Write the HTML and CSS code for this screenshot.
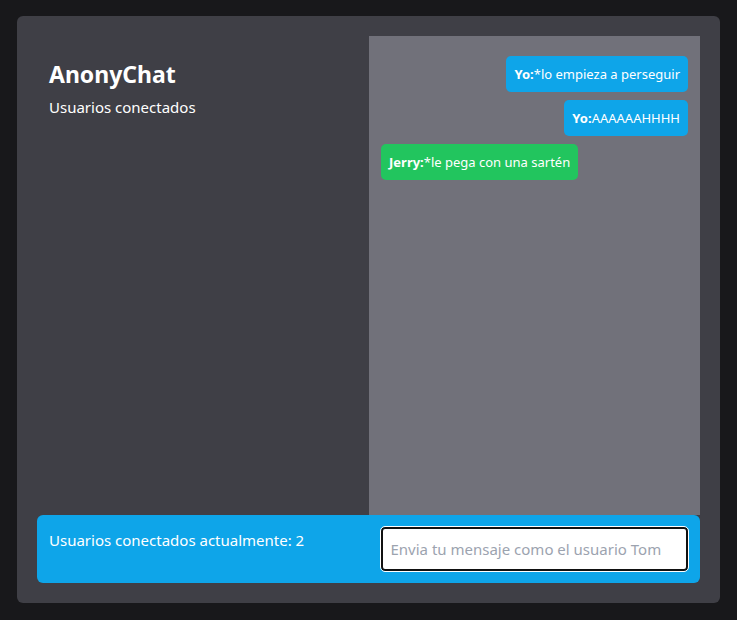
FILE: index.html
```html
<!DOCTYPE html>
<html lang="es">
<head>
<meta charset="utf-8">
<title>AnonyChat</title>
<link rel="stylesheet" href="styles.css">
</head>
<body>
<div class="card">
  <div class="main">
    <div class="side">
      <h1 class="title">AnonyChat</h1>
      <p class="subtitle">Usuarios conectados</p>
    </div>
    <div class="chat">
      <div class="msg me"><b>Yo:</b>*lo empieza a perseguir</div>
      <div class="msg me"><b>Yo:</b>AAAAAAHHHH</div>
      <div class="msg other"><b>Jerry:</b>*le pega con una sartén</div>
    </div>
  </div>
  <div class="bar">
    <p class="count">Usuarios conectados actualmente: 2</p>
    <div class="inputwrap">
      <input class="input" type="text" placeholder="Envia tu mensaje como el usuario Tom">
    </div>
  </div>
</div>
</body>
</html>
```
FILE: styles.css
```css
html, body { margin: 0; padding: 0; }
body {
  background: #18181b;
  font-family: "Noto Sans", "Open Sans", sans-serif;
  color: #fff;
  padding: 16px 17px;
  height: 620px;
  box-sizing: border-box;
}
.card {
  background: #3f3f46;
  border-radius: 6px;
  padding: 20px;
  width: 703px;
  height: 587px;
  box-sizing: border-box;
  display: flex;
  flex-direction: column;
}
.main {
  display: grid;
  grid-template-columns: 332px 331px;
  flex: 1;
}
.side { padding: 22px 12px; }
.title { margin: 0; font-size: 23px; line-height: 32px; font-weight: 700; }
.subtitle { margin: 5px 0 0; font-size: 15px; line-height: 24px; }
.chat {
  background: #71717a;
  padding: 20px 12px;
  display: flex;
  flex-direction: column;
  align-items: flex-end;
  gap: 8px;
}
.msg {
  font-size: 13px;
  line-height: 20px;
  padding: 8px;
  border-radius: 5px;
  background: #0ea5e9;
}
.msg.other { background: #22c55e; align-self: flex-start; }
.bar {
  background: #0ea5e9;
  border-radius: 6px;
  height: 68px;
  box-sizing: border-box;
  padding: 12px;
  display: grid;
  grid-template-columns: 1fr 1fr;
  column-gap: 24px;
}
.count { margin: 1px 0 0; font-size: 15px; line-height: 24px; }
.input {
  width: 100%;
  height: 44px;
  box-sizing: border-box;
  border: 2px solid #111;
  outline: 1px solid #fff;
  border-radius: 4px;
  padding: 0 8px;
  font-family: inherit;
  font-size: 15px;
  background: #fff;
}
.input::placeholder { color: #9ca3af; }
```
